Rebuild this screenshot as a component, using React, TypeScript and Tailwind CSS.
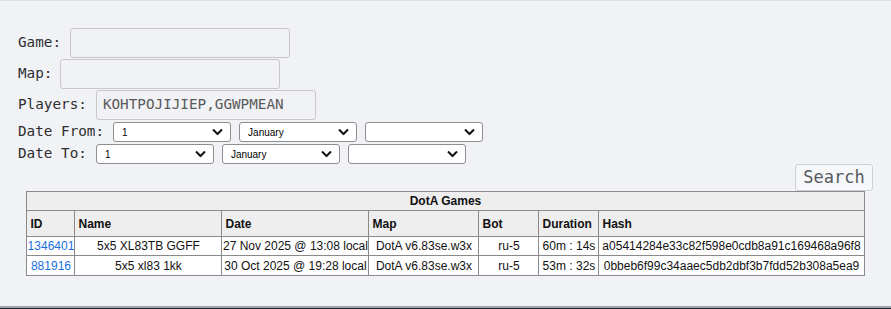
import React from 'react';

const mono = { fontFamily: '"DejaVu Sans Mono", "Liberation Mono", monospace' };

interface Game {
  id: string;
  name: string;
  date: string;
  map: string;
  bot: string;
  duration: string;
  hash: string;
}

const games: Game[] = [
  { id: '1346401', name: '5x5 XL83TB GGFF', date: '27 Nov 2025 @ 13:08 local', map: 'DotA v6.83se.w3x', bot: 'ru-5', duration: '60m : 14s', hash: 'a05414284e33c82f598e0cdb8a91c169468a96f8' },
  { id: '881916', name: '5x5 xl83 1kk', date: '30 Oct 2025 @ 19:28 local', map: 'DotA v6.83se.w3x', bot: 'ru-5', duration: '53m : 32s', hash: '0bbeb6f99c34aaec5db2dbf3b7fdd52b308a5ea9' },
];

const Chevron = () => (
  <svg width="11" height="7" viewBox="0 0 11 7" className="absolute right-[7px] top-1/2 -translate-y-1/2 pointer-events-none">
    <polyline points="1,1 5.5,5.5 10,1" fill="none" stroke="#111" strokeWidth="2" />
  </svg>
);

const Select = ({ value }: { value: string }) => (
  <div className="relative w-[118px] h-[20px] bg-white border border-[#8f8f8f] rounded-[3px] flex items-center pl-[8px] text-[10px] text-black" style={{ fontFamily: '"Liberation Sans", Arial, sans-serif' }}>
    {value}
    <Chevron />
  </div>
);

const TextInput = ({ value }: { value?: string }) => (
  <div className="w-[220px] h-[30px] border border-[#c8c8cc] rounded-[3px] flex items-center pl-[6px] text-[14.3px] text-[#5a5a5a]">
    {value}
  </div>
);

const App: React.FC = () => {
  return (
    <div className="min-h-[309px] flex flex-col bg-[#f1f2f6]">
      <div className="border-t border-[#dedfe4] h-[306px]">
        {/* Filter form */}
        <div className="px-[18px] pt-[27px] text-[#2e2e2e] text-[14.3px]" style={mono}>
          <div className="flex flex-col gap-px">
            <div className="flex items-center h-[30px]">
              <span>Game:</span>
              <div className="ml-[9px]"><TextInput /></div>
            </div>
            <div className="flex items-center h-[30px]">
              <span>Map:</span>
              <div className="ml-[8px]"><TextInput /></div>
            </div>
            <div className="flex items-center h-[30px]">
              <span>Players:</span>
              <div className="ml-[9px]"><TextInput value="KOHTPOJIJIEP,GGWPMEAN" /></div>
            </div>
          </div>
          <div className="flex items-center h-[22px] mt-px">
            <span>Date From:</span>
            <div className="ml-[9px] flex gap-[8px]">
              <Select value="1" />
              <Select value="January" />
              <Select value="" />
            </div>
          </div>
          <div className="flex items-center h-[22px]">
            <span>Date To:</span>
            <div className="ml-[9px] flex gap-[8px]">
              <Select value="1" />
              <Select value="January" />
              <Select value="" />
            </div>
          </div>
          <div className="flex justify-end -mt-px">
            <button className="h-[27px] w-[78px] border border-[#cfd0d4] bg-[#f6f7f9] rounded-[3px] text-[17px] text-[#555a60] leading-none" style={mono}>
              Search
            </button>
          </div>
        </div>

        {/* Games table */}
        <div className="flex justify-center">
          <table className="w-[837px] table-fixed border-collapse text-[12px] text-[#111]" style={{ fontFamily: '"Liberation Sans", Arial, sans-serif' }}>
            <colgroup>
              <col className="w-[48px]" />
              <col className="w-[147px]" />
              <col className="w-[147px]" />
              <col className="w-[110px]" />
              <col className="w-[60px]" />
              <col className="w-[60px]" />
              <col className="w-[265px]" />
            </colgroup>
            <thead>
              <tr className="h-[18px] bg-[#eeeeee]">
                <th colSpan={7} className="border border-[#8a8a8a] text-center font-bold p-0">DotA Games</th>
              </tr>
              <tr className="h-[26px] bg-[#eeeeee]">
                {['ID', 'Name', 'Date', 'Map', 'Bot', 'Duration', 'Hash'].map(h => (
                  <th key={h} className="border border-[#8a8a8a] text-left font-bold px-[3px] py-0 whitespace-nowrap">{h}</th>
                ))}
              </tr>
            </thead>
            <tbody>
              {games.map((g, i) => (
                <tr key={g.id} className={`bg-white ${i === 0 ? 'h-[19px]' : 'h-[20px]'}`}>
                  <td className="border border-[#8a8a8a] text-center p-0 whitespace-nowrap">
                    <a className="text-[#1a6fe0]">{g.id}</a>
                  </td>
                  <td className="border border-[#8a8a8a] text-center p-0 whitespace-nowrap">{g.name}</td>
                  <td className="border border-[#8a8a8a] text-center p-0 whitespace-nowrap">{g.date}</td>
                  <td className="border border-[#8a8a8a] text-center p-0 whitespace-nowrap">{g.map}</td>
                  <td className="border border-[#8a8a8a] text-center p-0 whitespace-nowrap">{g.bot}</td>
                  <td className="border border-[#8a8a8a] text-center p-0 whitespace-nowrap">{g.duration}</td>
                  <td className="border border-[#8a8a8a] text-center p-0 whitespace-nowrap">{g.hash}</td>
                </tr>
              ))}
            </tbody>
          </table>
        </div>
      </div>

      {/* Footer edge */}
      <div className="h-[2px] bg-[#a2a6ad]" />
      <div className="flex-1 bg-[#1f2530]" />
    </div>
  );
};

export default App;
